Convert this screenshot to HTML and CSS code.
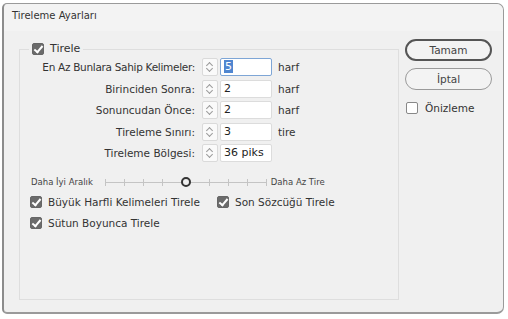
FILE: index.html
```html
<!DOCTYPE html>
<html lang="tr">
<head>
<meta charset="utf-8">
<link rel="stylesheet" href="styles.css">
</head>
<body>
<div class="window">
  <div class="titlebar">Tireleme Ayarları</div>
  <div class="content">
    <fieldset class="group">
      <legend class="legend"><span class="cb checked"></span><span>Tirele</span></legend>
      <div class="grid">
        <div class="lbl tight">En Az Bunlara Sahip Kelimeler:</div>
        <div class="spin"><span class="up"></span><span class="down"></span></div>
        <div class="field focus"><span class="sel">5</span></div>
        <div class="unit">harf</div>

        <div class="lbl">Birinciden Sonra:</div>
        <div class="spin"><span class="up"></span><span class="down"></span></div>
        <div class="field">2</div>
        <div class="unit">harf</div>

        <div class="lbl">Sonuncudan Önce:</div>
        <div class="spin"><span class="up"></span><span class="down"></span></div>
        <div class="field">2</div>
        <div class="unit">harf</div>

        <div class="lbl">Tireleme Sınırı:</div>
        <div class="spin"><span class="up"></span><span class="down"></span></div>
        <div class="field">3</div>
        <div class="unit">tire</div>

        <div class="lbl">Tireleme Bölgesi:</div>
        <div class="spin"><span class="up"></span><span class="down"></span></div>
        <div class="field">36 piks</div>
        <div class="unit"></div>
      </div>
      <div class="slider-row">
        <span class="small">Daha İyi Aralık</span>
        <div class="track">
          <span class="tick"></span><span class="tick"></span><span class="tick"></span><span class="tick"></span>
          <span class="knob"></span>
          <span class="tick"></span><span class="tick"></span><span class="tick"></span><span class="tick"></span>
        </div>
        <span class="small">Daha Az Tire</span>
      </div>
      <div class="checks">
        <label class="check w1"><span class="cb checked"></span>Büyük Harfli Kelimeleri Tirele</label>
        <label class="check"><span class="cb checked"></span>Son Sözcüğü Tirele</label>
      </div>
      <div class="checks">
        <label class="check"><span class="cb checked"></span>Sütun Boyunca Tirele</label>
      </div>
    </fieldset>
    <div class="side">
      <div class="btn default">Tamam</div>
      <div class="btn">İptal</div>
      <label class="check preview"><span class="cb"></span>Önizleme</label>
    </div>
  </div>
</div>
</body>
</html>
```
FILE: styles.css
```css
* { box-sizing: border-box; }
html, body { margin: 0; padding: 0; }
body {
  width: 508px;
  height: 319px;
  background: #ffffff;
  font-family: "DejaVu Sans", Verdana, sans-serif;
  color: #333;
  overflow: hidden;
}
.window {
  margin: 3px 0 0 2px;
  width: 502px;
  height: 311px;
  background: #f0f0f0;
  border: 1px solid #9a9a9a;
  border-left: 2px solid #8c8c8c;
  border-bottom: 2px solid #9a9a9a;
  border-radius: 5px 7px 7px 5px;
  display: flex;
  flex-direction: column;
}
.titlebar {
  height: 27px;
  padding: 6px 0 0 8px;
  font-size: 10px;
  color: #333;
  background: #f3f3f3;
  border-radius: 5px 7px 0 0;
}
.content {
  display: flex;
  align-items: flex-start;
  padding: 0 0 0 15px;
  flex: 1;
}
.group {
  margin: 11px 0 0 0;
  padding: 0;
  width: 380px;
  height: 258px;
  border: 1px solid #dedede;
  border-radius: 0;
  font-size: 10.5px;
}
.legend {
  margin-left: 9px;
  padding: 0 3px;
  display: flex;
  align-items: center;
  gap: 6px;
  font-size: 11px;
  line-height: 14px;
}
.cb {
  display: inline-block;
  width: 12px;
  height: 12px;
  border-radius: 2px;
  border: 1px solid #8a8a8a;
  background: #fff;
  position: relative;
  flex: none;
}
.cb.checked {
  background: #6b6b6b;
  border-color: #666;
}
.cb.checked::after {
  content: "";
  position: absolute;
  left: 3px;
  top: 0px;
  width: 3px;
  height: 7px;
  border: solid #fff;
  border-width: 0 2px 2px 0;
  transform: rotate(40deg);
}
.grid {
  display: grid;
  grid-template-columns: 182px 16px 54px auto;
  column-gap: 0;
  row-gap: 3.5px;
  margin-top: 2px;
  align-items: center;
}
.lbl {
  text-align: right;
  padding-right: 7px;
  font-size: 10.5px;
  white-space: nowrap;
}
.lbl.tight { letter-spacing: -0.3px; }
.spin {
  height: 18px;
  width: 16px;
  background: #fafafa;
  border: 1px solid #dadada;
  border-radius: 2px;
  position: relative;
}
.spin .up, .spin .down {
  position: absolute;
  left: 4px;
  width: 5px;
  height: 5px;
  border: solid #9a9a9a;
  border-width: 1px 0 0 1px;
}
.spin .up { top: 4px; transform: rotate(45deg); }
.spin .down { top: 7px; transform: rotate(-135deg); }
.field {
  margin-left: 2px;
  height: 18px;
  width: 52px;
  background: #fff;
  border: 1px solid #dcdcdc;
  border-radius: 2px;
  padding: 1px 0 0 3px;
  font-size: 11px;
  line-height: 14px;
  color: #222;
}
.field.focus { border-color: #7ea6d6; }
.sel {
  background: #4f86d0;
  color: #fff;
  padding: 0 1px;
}
.unit {
  padding-left: 6px;
  font-size: 10.5px;
}
.slider-row {
  display: flex;
  align-items: center;
  margin: 13px 0 0 11px;
  height: 14px;
}
.small { font-size: 8.5px; color: #444; }
.track {
  margin: 0 4px 0 12px;
  width: 162px;
  height: 9px;
  display: flex;
  align-items: center;
  justify-content: space-between;
  background: linear-gradient(#c4c4c4, #c4c4c4) 0 4px / 100% 1px no-repeat;
}
.tick {
  width: 1px;
  height: 7px;
  background: #c4c4c4;
}
.knob {
  width: 10px;
  height: 10px;
  border: 2px solid #333;
  border-radius: 50%;
  background: #f0f0f0;
}
.checks {
  display: flex;
  margin: 5px 0 0 10px;
  height: 15px;
  align-items: center;
}
.checks + .checks { margin-top: 6px; }
.check {
  display: flex;
  align-items: center;
  gap: 6px;
  font-size: 10.5px;
  white-space: nowrap;
}
.check.w1 { width: 187px; }
.side {
  margin-left: 6px;
  padding-top: 8px;
  display: flex;
  flex-direction: column;
  gap: 7px;
}
.btn {
  width: 87px;
  height: 22px;
  border: 1px solid #9a9a9a;
  border-radius: 11px;
  background: #f3f3f3;
  font-size: 10.5px;
  text-align: center;
  line-height: 20px;
  color: #444;
}
.btn.default {
  border: 2px solid #555;
  line-height: 18px;
}
.preview {
  margin-top: 5px;
  margin-left: 1px;
  font-size: 10.5px;
  gap: 7px;
}
.preview .cb { border-color: #888; }
```
